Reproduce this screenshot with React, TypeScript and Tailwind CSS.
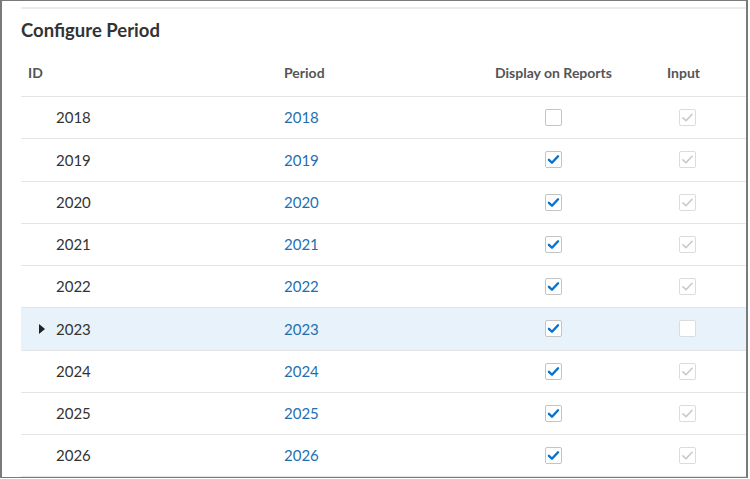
import { Fragment } from 'react';

type Row = {
    id: string;
    display: boolean;
    input: boolean;
    selected?: boolean;
};

const ROWS: Row[] = [
    { id: '2018', display: false, input: true },
    { id: '2019', display: true, input: true },
    { id: '2020', display: true, input: true },
    { id: '2021', display: true, input: true },
    { id: '2022', display: true, input: true },
    { id: '2023', display: true, input: false, selected: true },
    { id: '2024', display: true, input: true },
    { id: '2025', display: true, input: true },
    { id: '2026', display: true, input: true },
];

function CheckBox({ checked, disabled }: { checked: boolean; disabled?: boolean }) {
    return (
        <span
            className={`flex h-[17px] w-[17px] items-center justify-center rounded-[2px] border bg-white ${
                disabled ? 'border-[#dcdcdc]' : 'border-[#c4c4c4]'
            }`}
        >
            {checked && (
                <svg width="13" height="13" viewBox="0 0 12 12" fill="none">
                    <path
                        d="M1.8 6.3 L4.6 9 L10.2 3"
                        stroke={disabled ? '#c9c9c9' : '#0572ce'}
                        strokeWidth={disabled ? 1.5 : 2.2}
                        strokeLinecap="round"
                        strokeLinejoin="round"
                    />
                </svg>
            )}
        </span>
    );
}

export default function App() {
    return (
        <div
            className="h-[479px] w-[750px] overflow-hidden bg-white"
            style={{ fontFamily: 'Lato, "Open Sans", sans-serif' }}
        >
            <div className="h-[478px] w-[748px] border-l-2 border-t border-r-2 border-b border-[#7a7a7a] pl-[19px]">
                <div className="mt-[6px] h-[2px] bg-[#ebebeb]" />

                {/* Title */}
                <h2 className="mt-[9px] h-[24px] text-[18.5px] font-bold leading-[24px] text-[#333]">
                    Configure Period
                </h2>

                {/* Header */}
                <div className="mt-[23px] grid h-[32px] grid-cols-[263px_211px_172px_1fr] items-start border-b border-[#e4e4e4] text-[14px] font-bold text-[#555]">
                    <div className="pl-[7px] leading-[16px]">ID</div>
                    <div className="leading-[16px]">Period</div>
                    <div className="leading-[16px]">Display on Reports</div>
                    <div className="leading-[16px]">Input</div>
                </div>

                {/* Rows */}
                {ROWS.map((row) => (
                    <Fragment key={row.id}>
                        <div
                            className={`grid h-[42.25px] grid-cols-[263px_211px_172px_1fr] items-center border-b border-[#e4e4e4] text-[15px] ${
                                row.selected ? 'bg-[#e7f2fa]' : ''
                            }`}
                        >
                            <div className="relative pl-[35px] text-[#333]">
                                {row.selected && (
                                    <span className="absolute left-[18px] top-1/2 h-0 w-0 -translate-y-1/2 border-y-[5px] border-l-[6px] border-y-transparent border-l-[#222]" />
                                )}
                                {row.id}
                            </div>
                            <div className="text-[#1f6fb2]">{row.id}</div>
                            <div className="flex pl-[50px]">
                                <CheckBox checked={row.display} />
                            </div>
                            <div className="flex pl-[12px]">
                                <CheckBox checked={row.input} disabled />
                            </div>
                        </div>
                    </Fragment>
                ))}
            </div>
        </div>
    );
}
